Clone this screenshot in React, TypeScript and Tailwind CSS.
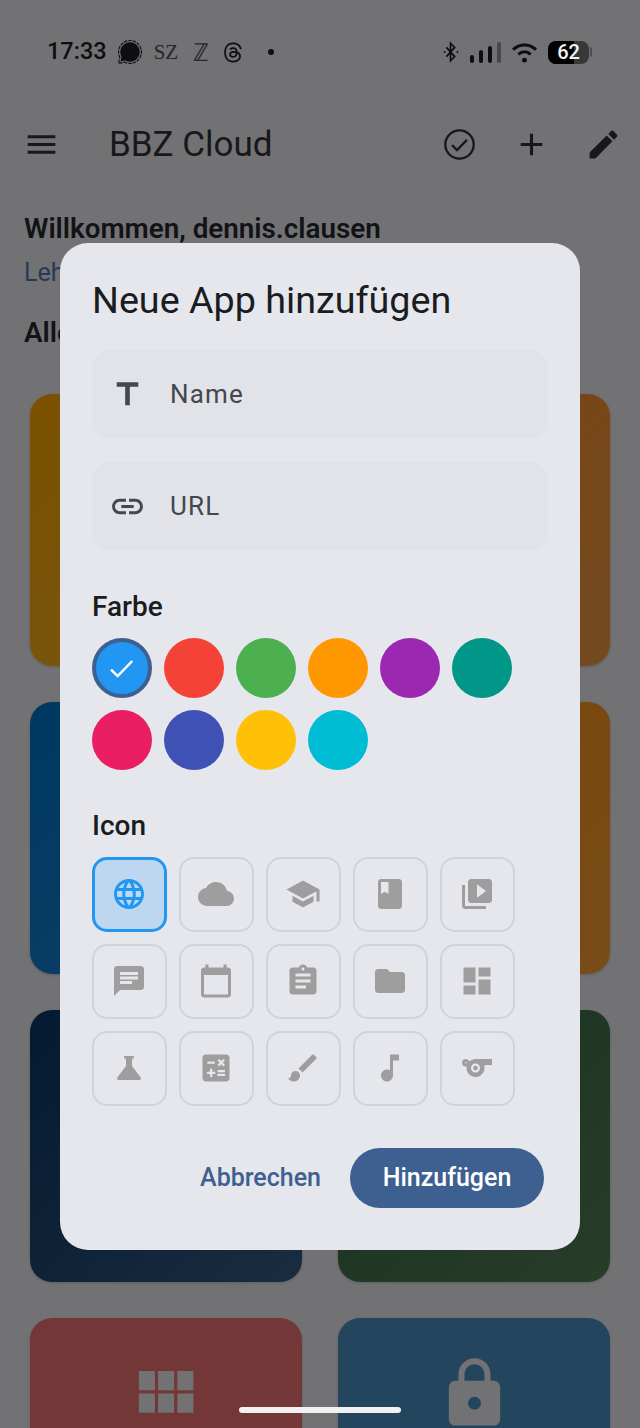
import { SiSignal, SiThreads } from "react-icons/si";

const ICONS: Record<string, string> = {
    menu: "M3 18h18v-2H3v2zm0-5h18v-2H3v2zm0-7v2h18V6H3z",
    add: "M19 13h-6v6h-2v-6H5v-2h6V5h2v6h6v2z",
    edit: "M3 17.25V21h3.75L17.81 9.94l-3.75-3.75L3 17.25zM20.71 7.04c.39-.39.39-1.02 0-1.41l-2.34-2.34c-.39-.39-1.02-.39-1.41 0l-1.83 1.83 3.75 3.75 1.83-1.83z",
    title: "M5 4v3h5.5v12h3V7H19V4z",
    link: "M3.9 12c0-1.71 1.39-3.1 3.1-3.1h4V7H7c-2.76 0-5 2.24-5 5s2.24 5 5 5h4v-1.9H7c-1.71 0-3.1-1.39-3.1-3.1zM8 13h8v-2H8v2zm9-6h-4v1.9h4c1.71 0 3.1 1.39 3.1 3.1s-1.39 3.1-3.1 3.1h-4V17h4c2.76 0 5-2.24 5-5s-2.24-5-5-5z",
    language: "M11.99 2C6.47 2 2 6.48 2 12s4.47 10 9.99 10C17.52 22 22 17.52 22 12S17.52 2 11.99 2zm6.93 6h-2.95c-.32-1.25-.78-2.45-1.38-3.56 1.84.63 3.37 1.91 4.33 3.56zM12 4.04c.83 1.2 1.48 2.53 1.91 3.96h-3.82c.43-1.43 1.08-2.76 1.91-3.96zM4.26 14C4.1 13.36 4 12.69 4 12s.1-1.36.26-2h3.38c-.08.66-.14 1.32-.14 2 0 .68.06 1.34.14 2H4.26zm.82 2h2.95c.32 1.25.78 2.45 1.38 3.56-1.84-.63-3.37-1.9-4.33-3.56zm2.95-8H5.08c.96-1.66 2.49-2.93 4.33-3.56C8.81 5.55 8.35 6.75 8.03 8zM12 19.96c-.83-1.2-1.48-2.53-1.91-3.96h3.82c-.43 1.43-1.08 2.76-1.91 3.96zM14.34 14H9.66c-.09-.66-.16-1.32-.16-2 0-.68.07-1.35.16-2h4.68c.09.65.16 1.32.16 2 0 .68-.07 1.34-.16 2zm.25 5.56c.6-1.11 1.06-2.31 1.38-3.56h2.95c-.96 1.65-2.49 2.93-4.33 3.56zM16.36 14c.08-.66.14-1.32.14-2 0-.68-.06-1.34-.14-2h3.38c.16.64.26 1.31.26 2s-.1 1.36-.26 2h-3.38z",
    cloud: "M19.35 10.04C18.67 6.59 15.64 4 12 4 9.11 4 6.6 5.64 5.35 8.04 2.34 8.36 0 10.91 0 14c0 3.31 2.69 6 6 6h13c2.76 0 5-2.24 5-5 0-2.64-2.05-4.78-4.65-4.96z",
    school: "M5 13.18v4L12 21l7-3.82v-4L12 17l-7-3.82zM12 3L1 9l11 6 9-4.91V17h2V9L12 3z",
    book: "M18 2H6c-1.1 0-2 .9-2 2v16c0 1.1.9 2 2 2h12c1.1 0 2-.9 2-2V4c0-1.1-.9-2-2-2zM6 4h5v8l-2.5-1.5L6 12V4z",
    video: "M4 6H2v14c0 1.1.9 2 2 2h14v-2H4V6zm16-4H8c-1.1 0-2 .9-2 2v12c0 1.1.9 2 2 2h12c1.1 0 2-.9 2-2V4c0-1.1-.9-2-2-2zm-8 12.5v-9l6 4.5-6 4.5z",
    chat: "M20 2H4c-1.1 0-1.99.9-1.99 2L2 22l4-4h14c1.1 0 2-.9 2-2V4c0-1.1-.9-2-2-2zM6 9h12v2H6V9zm8 5H6v-2h8v2zm4-6H6V6h12v2z",
    calendar: "M20 3h-1V1h-2v2H7V1H5v2H4c-1.1 0-2 .9-2 2v16c0 1.1.9 2 2 2h16c1.1 0 2-.9 2-2V5c0-1.1-.9-2-2-2zm0 18H4V8h16v13z",
    assignment: "M19 3h-4.18C14.4 1.84 13.3 1 12 1c-1.3 0-2.4.84-2.82 2H5c-1.1 0-2 .9-2 2v14c0 1.1.9 2 2 2h14c1.1 0 2-.9 2-2V5c0-1.1-.9-2-2-2zm-7 0c.55 0 1 .45 1 1s-.45 1-1 1-1-.45-1-1 .45-1 1-1zm2 14H7v-2h7v2zm3-4H7v-2h10v2zm0-4H7V7h10v2z",
    folder: "M10 4H4c-1.1 0-1.99.9-1.99 2L2 18c0 1.1.9 2 2 2h16c1.1 0 2-.9 2-2V8c0-1.1-.9-2-2-2h-8l-2-2z",
    dashboard: "M3 13h8V3H3v10zm0 8h8v-6H3v6zm10 0h8V11h-8v10zm0-18v6h8V3h-8z",
    science: "M19.8 18.4L14 10.67V6.5l1.35-1.69c.26-.33.03-.81-.39-.81H9.04c-.42 0-.65.48-.39.81L10 6.5v4.17L4.2 18.4c-.49.66-.02 1.6.8 1.6h14c.82 0 1.29-.94.8-1.6z",
    calculate: "M19 3H5c-1.1 0-2 .9-2 2v14c0 1.1.9 2 2 2h14c1.1 0 2-.9 2-2V5c0-1.1-.9-2-2-2zm-5.97 4.06L14.09 6l1.41 1.41L16.91 6l1.06 1.06-1.41 1.41 1.41 1.41-1.06 1.06-1.41-1.4-1.41 1.41-1.06-1.06 1.41-1.41-1.41-1.42zm-6.78.66h5v1.5h-5v-1.5zM11.5 16h-2v2H8v-2H6v-1.5h2v-2h1.5v2h2V16zm6.5 1.25h-5v-1.5h5v1.5zm0-2.5h-5v-1.5h5v1.5z",
    brush: "M7 14c-1.66 0-3 1.34-3 3 0 1.31-1.16 2-2 2 .92 1.22 2.49 2 4 2 2.21 0 4-1.79 4-4 0-1.66-1.34-3-3-3zm13.71-9.37l-1.34-1.34c-.39-.39-1.02-.39-1.41 0L9 12.25 11.75 15l8.96-8.96c.39-.39.39-1.03 0-1.41z",
    music: "M12 3v10.55c-.59-.34-1.27-.55-2-.55-2.21 0-4 1.79-4 4s1.79 4 4 4 4-1.79 4-4V7h4V3h-6z",
    sports: "M11.23 6C9.57 6 8.01 6.66 6.87 7.73 6.54 6.73 5.61 6 4.5 6 3.12 6 2 7.12 2 8.5S3.12 11 4.5 11c.21 0 .41-.03.61-.08-.05.25-.09.51-.1.78-.18 3.68 2.95 6.68 6.68 6.27 2.55-.28 4.68-2.26 5.19-4.77.15-.71.15-1.4.06-2.06-.09-.6.38-1.13.99-1.13H22V6H11.23zM4.5 9c-.28 0-.5-.22-.5-.5s.22-.5.5-.5.5.22.5.5-.22.5-.5.5zm6.5 6c-1.66 0-3-1.34-3-3s1.34-3 3-3 3 1.34 3 3-1.34 3-3 3zm0-4.5a1.5 1.5 0 1 0 0 3 1.5 1.5 0 0 0 0-3z",
    grid: "M4 11h5V5H4v6zm0 7h5v-6H4v6zm6 0h5v-6h-5v6zm6 0h5v-6h-5v6zm-6-7h5V5h-5v6zm6-6v6h5V5h-5z",
    lock: "M18 8h-1V6c0-2.76-2.24-5-5-5S7 3.24 7 6v2H6c-1.1 0-2 .9-2 2v10c0 1.1.9 2 2 2h12c1.1 0 2-.9 2-2V10c0-1.1-.9-2-2-2zm-6 9c-1.1 0-2-.9-2-2s.9-2 2-2 2 .9 2 2-.9 2-2 2zm3.1-9H8.9V6c0-1.71 1.39-3.1 3.1-3.1 1.71 0 3.1 1.39 3.1 3.1v2z",
};

function Mi({ name, className }: { name: string; className: string }) {
    return (
        <svg viewBox="0 0 24 24" fill="currentColor" fillRule="evenodd" className={className}>
            <path d={ICONS[name]} />
        </svg>
    );
}

const SWATCHES = [
    "bg-[#2196f3]", "bg-[#f44336]", "bg-[#4caf50]", "bg-[#ff9800]", "bg-[#9c27b0]",
    "bg-[#009688]", "bg-[#e91e63]", "bg-[#3f51b5]", "bg-[#ffc107]", "bg-[#00bcd4]",
];

const PICKER_ICONS = [
    "language", "cloud", "school", "book", "video",
    "chat", "calendar", "assignment", "folder", "dashboard",
    "science", "calculate", "brush", "music", "sports",
];

const CARDS = [
    { bg: "bg-gradient-to-br from-[#7a5100] to-[#785614]" },
    { bg: "bg-gradient-to-br from-[#7a4310] to-[#744a20]" },
    { bg: "bg-gradient-to-br from-[#003862] to-[#0f4066]" },
    { bg: "bg-gradient-to-br from-[#7a4506] to-[#784c18]" },
    { bg: "bg-gradient-to-br from-[#041a30] to-[#1a2c40]" },
    { bg: "bg-gradient-to-br from-[#193220] to-[#283c2a]" },
    { bg: "bg-[#733737]", icon: "grid", iconClass: "-ml-[4px]" },
    { bg: "bg-[#23455e]", icon: "lock", iconClass: "" },
];

function StatusBar() {
    return (
        <div className="flex h-[100px] items-center justify-between pl-[47px] pr-[48px] pt-[4px]">
            <div className="flex items-center text-[#0d0e10]">
                <span className="text-[23.5px] font-medium leading-none">17:33</span>
                <SiSignal className="ml-[11px] h-[24px] w-[24px]" />
                <span className="ml-[12px] font-['Liberation_Serif',serif] text-[21px] leading-none text-[#26272a]">SZ</span>
                <span className="ml-[15px] font-['Liberation_Serif',serif] text-[25px] leading-none text-[#26272a]">ℤ</span>
                <SiThreads className="ml-[14px] h-[23px] w-[20px]" />
                <span className="ml-[25px] h-[6px] w-[6px] rounded-full bg-[#0d0e10]" />
            </div>
            <div className="flex items-center text-[#0d0e10]">
                <svg viewBox="0 0 16 24" className="h-[22px] w-[16px]" fill="none" stroke="currentColor" strokeWidth="1.8">
                    <path d="M3 7l9 10-4.5 4.5v-19L12 7l-9 10" />
                    <circle cx="1" cy="12" r="1" fill="currentColor" stroke="none" />
                    <circle cx="15" cy="12" r="1" fill="currentColor" stroke="none" />
                </svg>
                <div className="ml-[11px] flex items-end gap-[5px]">
                    <span className="h-[8px] w-[4px] rounded-full bg-[#0d0e10]" />
                    <span className="h-[13px] w-[4px] rounded-full bg-[#0d0e10]" />
                    <span className="h-[17px] w-[4px] rounded-full bg-[#0d0e10]" />
                    <span className="h-[21px] w-[4px] rounded-full bg-[#47484a]" />
                </div>
                <svg viewBox="0 0 28 22" className="ml-[10px] h-[21px] w-[27px]" fill="none" stroke="currentColor" strokeWidth="3.2">
                    <path d="M2 8c7-6.5 17-6.5 24 0" />
                    <path d="M7.5 13c4-3.6 9-3.6 13 0" />
                    <circle cx="14" cy="19" r="2.6" fill="currentColor" stroke="none" />
                </svg>
                <div className="ml-[10px] flex items-center">
                    <div className="relative flex h-[23px] w-[41px] items-center justify-center overflow-hidden rounded-[8px] bg-[#37383a]">
                        <div className="absolute inset-y-0 left-0 w-[26px] bg-black" />
                        <span className="relative text-[20px] font-medium leading-none text-[#f2f2f2]">62</span>
                    </div>
                    <span className="ml-[1px] h-[10px] w-[2px] rounded-r-full bg-[#4b4c4e]" />
                </div>
            </div>
        </div>
    );
}

function AppBar() {
    return (
        <div className="flex h-[88px] items-center text-[#17181b]">
            <Mi name="menu" className="ml-[23px] h-[37px] w-[37px]" />
            <span className="ml-[49px] flex-1 text-[35px] leading-none">BBZ Cloud</span>
            <svg viewBox="0 0 24 24" fill="none" stroke="currentColor" strokeWidth="1.5" className="mr-[35px] h-[37px] w-[37px]">
                <circle cx="12" cy="12" r="9.2" />
                <path d="M7.2 12.4l3.2 3.2 6.4-6.6" />
            </svg>
            <Mi name="add" className="mr-[35px] h-[37px] w-[37px]" />
            <Mi name="edit" className="mr-[18px] h-[37px] w-[37px]" />
        </div>
    );
}

function Field({ icon, label, className }: { icon: string; label: string; className?: string }) {
    return (
        <div className={`flex h-[88px] items-center rounded-[18px] bg-[#e2e3e9] pl-[17px] ${className ?? ""}`}>
            <Mi name={icon} className="h-[37px] w-[37px] text-[#44474c]" />
            <span className="ml-[24px] text-[26px] leading-none tracking-[1.2px] text-[#44474c]">{label}</span>
        </div>
    );
}

function AddAppDialog() {
    return (
        <div className="absolute left-[60px] top-[243px] h-[1007px] w-[520px] rounded-[28px] bg-[#e6e7ed] px-[32px] pt-[35px]">
            <h2 className="text-[37.7px] font-normal leading-[44px] text-[#191c20]">Neue App hinzufügen</h2>
            <Field icon="title" label="Name" className="mt-[28px]" />
            <Field icon="link" label="URL" className="mt-[24px]" />

            <div className="mt-[42px] text-[28px] font-medium leading-[30px] text-[#191c20]">Farbe</div>
            <div className="mt-[16px] flex flex-wrap gap-[12px]">
                {SWATCHES.map((c, i) => (
                    <div
                        key={c}
                        className={`flex h-[60px] w-[60px] items-center justify-center rounded-full ${c} ${i === 0 ? "border-[4px] border-[#3d6090]" : ""}`}
                    >
                        {i === 0 && (
                            <svg viewBox="0 0 24 24" fill="none" stroke="white" strokeWidth="2.1" className="h-[28px] w-[28px]">
                                <path d="M2.6 13.4l5.7 5.5L20.8 6" />
                            </svg>
                        )}
                    </div>
                ))}
            </div>

            <div className="mt-[41px] text-[28px] font-medium leading-[30px] text-[#191c20]">Icon</div>
            <div className="mt-[16px] grid grid-cols-[repeat(5,74.5px)] gap-[12.5px]">
                {PICKER_ICONS.map((name, i) => (
                    <div
                        key={name}
                        className={
                            i === 0
                                ? "flex h-[74.5px] items-center justify-center rounded-[15px] border-[3px] border-[#2196f3] bg-[#bed7f0] text-[#2196f3]"
                                : "flex h-[74.5px] items-center justify-center rounded-[15px] border-[2px] border-[#d2d3d8] text-[#9e9e9e]"
                        }
                    >
                        <Mi name={name} className="h-[36px] w-[36px]" />
                    </div>
                ))}
            </div>

            <div className="mt-[42px] flex items-center justify-end pr-[4px]">
                <span className="text-[25px] font-medium leading-none text-[#3d6090]">Abbrechen</span>
                <button className="ml-[29px] h-[60px] w-[194px] rounded-full bg-[#3d6090] text-[25px] font-medium text-white">
                    Hinzufügen
                </button>
            </div>
        </div>
    );
}

export default function App() {
    return (
        <div className="relative h-[1428px] w-[640px] overflow-hidden bg-[#727274] font-['Roboto',sans-serif]">
            <StatusBar />
            <AppBar />
            <div className="px-[24px] pt-[25px]">
                <div className="text-[27.8px] font-semibold leading-[32px] text-[#111316]">Willkommen, dennis.clausen</div>
                <div className="mt-[13px] text-[25px] leading-[30px] text-[#263a58]">Lehrkraft</div>
                <div className="mt-[29px] text-[27.8px] font-semibold leading-[32px] text-[#111316]">Alle Apps</div>
            </div>
            <div className="mt-[45px] grid grid-cols-[272px_272px] gap-[36px] pl-[30px]">
                {CARDS.map((card, i) => (
                    <div key={i} className={`flex h-[272px] justify-center rounded-[22px] pt-[37px] shadow-[0_1px_3px_rgba(0,0,0,0.18)] ${card.bg}`}>
                        {card.icon && <Mi name={card.icon} className={`h-[77px] w-[77px] text-[#727274] ${card.iconClass}`} />}
                    </div>
                ))}
            </div>
            <AddAppDialog />
            <div className="absolute bottom-[15px] left-[239px] h-[6px] w-[162px] rounded-full bg-[#f1f1f2]" />
        </div>
    );
}
